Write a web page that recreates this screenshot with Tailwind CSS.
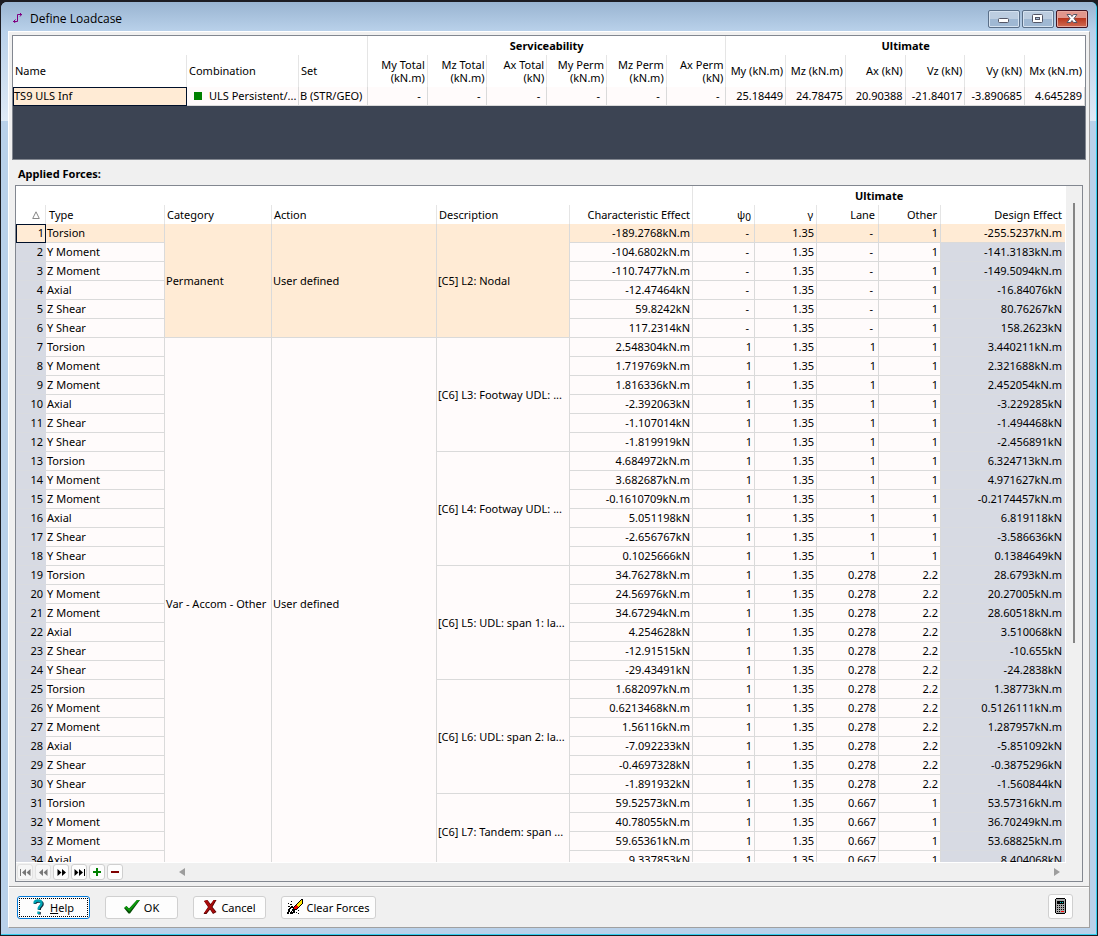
<!DOCTYPE html>
<html lang="en">
<head>
  <meta charset="UTF-8">
  <meta name="viewport" content="width=device-width, initial-scale=1.0">
  <title>Define Loadcase</title>
  <script src="https://cdn.jsdelivr.net/npm/@tailwindcss/browser@4"></script>
</head>
<body class="h-screen overflow-hidden bg-[#1c1c22] font-['Tahoma','Noto_Sans',sans-serif] text-[11px] leading-[13px] text-black">
  <div class="h-full p-px pt-[2px]">
    <div class="flex h-full flex-col rounded-t-md border-r border-b border-[#35cdee] bg-[#b9d1ea]">

      <!-- Title bar -->
      <header class="flex h-[29px] shrink-0 items-center rounded-t-md bg-linear-to-b from-[#99b4d1] to-[#b9d1ea] pt-[5px] pr-[8px] pl-[12px]">
        <svg class="mr-[7px] mb-[2px] size-[10px]" viewBox="0 0 10 10" fill="none" stroke="#800080">
          <path d="M0 8.500H4.500V1.500H9M2.500 6.500L.5 8.500L2.500 10M7 0L8.500 1.500L7 3.500"/>
        </svg>
        <h1 class="font-['Segoe_UI','Open_Sans',sans-serif] text-[12px] leading-4">Define Loadcase</h1>
        <div class="ml-auto flex gap-[2px]">
          <button type="button" aria-label="Minimize" class="flex h-[18px] w-8 items-center justify-center rounded-[2px] border border-[#5a6f88] bg-linear-to-b from-[#bccde0] from-50% to-[#9fb8d3] to-50% shadow-[inset_0_0_0_1px_#d5e2f0]">
            <svg class="size-3" viewBox="0 0 12 12"><rect x=".5" y="5.500" width="10" height="4" rx="1" fill="#fff" stroke="#535666"/></svg>
          </button>
          <button type="button" aria-label="Maximize" class="flex h-[18px] w-8 items-center justify-center rounded-[2px] border border-[#5a6f88] bg-linear-to-b from-[#bccde0] from-50% to-[#9fb8d3] to-50% shadow-[inset_0_0_0_1px_#d5e2f0]">
            <svg class="size-3" viewBox="0 0 12 12"><rect x=".5" y="1.500" width="10" height="8" rx="1" fill="#fff" stroke="#535666"/><rect x="3.500" y="4.500" width="4" height="2" fill="#a9bfd8" stroke="#535666"/></svg>
          </button>
          <button type="button" aria-label="Close" class="flex h-[18px] w-8 items-center justify-center rounded-[2px] border border-[#431422] bg-linear-to-b from-[#e0968c] from-45% via-[#b8341b] via-45% to-[#d06a52] shadow-[inset_0_0_0_1px_#e8aaa0]">
            <svg class="size-3" viewBox="0 0 12 12"><path d="M1 1.500H4.500L6 3.500L7.500 1.500H11L8 5.500L11 9.500H7.500L6 7.500L4.500 9.500H1L4 5.500Z" fill="#fff" stroke="#535666"/></svg>
          </button>
        </div>
      </header>

      <div class="min-h-0 flex-1 bg-linear-to-b from-[#b9d1ea] to-[#dfeaf6] bg-[length:100%_90px] bg-no-repeat pr-[6px] pb-[6px] pl-[7px]">
        <main class="flex h-full flex-col border border-t-white border-r-[#a0a0a0] border-b-[#a0a0a0] border-l-white bg-[#f0f0f0]">

          <!-- Loadcase summary -->
          <section class="mx-[3px] mt-[3px] h-[125px] shrink-0 border border-[#828790] bg-[#3c4453]">
            <table class="w-full table-fixed border-separate border-spacing-0 bg-white">
              <colgroup>
                <col class="w-[174px]"><col class="w-[112px]"><col class="w-[69px]">
                <col span="12">
              </colgroup>
              <thead>
                <tr class="h-[19px]">
                  <th colspan="3" class="border-r border-[#e5e5e5] p-0"></th>
                  <th colspan="6" scope="colgroup" class="border-r border-[#e5e5e5] p-0 font-bold">Serviceability</th>
                  <th colspan="6" scope="colgroup" class="p-0 font-bold">Ultimate</th>
                </tr>
                <tr id="case-head" class="h-[32px]"></tr>
              </thead>
              <tbody>
                <tr id="case-row" class="h-[19px] bg-[#fffbfb]"></tr>
              </tbody>
            </table>
          </section>

          <h2 class="shrink-0 px-[9px] pt-[7px] pb-[5px] font-bold">Applied Forces:</h2>

          <!-- Applied forces -->
          <section class="mx-[6px] flex min-h-0 flex-1 flex-col border border-[#828790]">
            <div class="flex min-h-0 flex-1">
              <div class="min-w-0 flex-1 overflow-hidden border-r border-b border-white bg-[#fffbfb]">
                <table class="w-full table-fixed border-separate border-spacing-0">
                  <colgroup>
                    <col class="w-[30px]"><col class="w-[119px]"><col class="w-[107px]"><col class="w-[165px]"><col class="w-[133px]"><col class="w-[123px]">
                    <col class="w-[62px]"><col class="w-[62px]"><col class="w-[62px]"><col class="w-[62px]"><col class="w-[124px]">
                  </colgroup>
                  <thead class="bg-white">
                    <tr class="h-[19px]">
                      <th colspan="6" class="border-r border-[#e5e5e5] p-0"></th>
                      <th colspan="5" scope="colgroup" class="p-0 font-bold">Ultimate</th>
                    </tr>
                    <tr class="h-[19px]">
                      <th scope="col" aria-label="Number" class="border-r border-[#e5e5e5] p-0 pr-[5px]">
                        <svg class="ml-auto size-2" viewBox="0 0 8 8" fill="none" stroke="#888"><path d="M.7 7.500L4 .8L7.300 7.500Z"/></svg>
                      </th>
                      <th scope="col" class="border-r border-[#e5e5e5] p-0 pl-[3px] text-left font-normal">Type</th>
                      <th scope="col" class="border-r border-[#e5e5e5] p-0 pl-[2px] text-left font-normal">Category</th>
                      <th scope="col" class="border-r border-[#e5e5e5] p-0 pl-[2px] text-left font-normal">Action</th>
                      <th scope="col" class="border-r border-[#e5e5e5] p-0 pl-[2px] text-left font-normal">Description</th>
                      <th scope="col" class="border-r border-[#e5e5e5] p-0 pr-[2px] text-right font-normal">Characteristic Effect</th>
                      <th scope="col" class="border-r border-[#e5e5e5] p-0 pr-[3px] text-right font-normal">ψ<sub class="bottom-[-2px] text-[10px]">0</sub></th>
                      <th scope="col" class="border-r border-[#e5e5e5] p-0 pr-[3px] text-right font-normal">γ</th>
                      <th scope="col" class="border-r border-[#e5e5e5] p-0 pr-[3px] text-right font-normal">Lane</th>
                      <th scope="col" class="border-r border-[#e5e5e5] p-0 pr-[3px] text-right font-normal">Other</th>
                      <th scope="col" class="p-0 pr-[3px] text-right font-normal">Design Effect</th>
                    </tr>
                  </thead>
                  <tbody id="forces"></tbody>
                </table>
              </div>
              <div class="w-4 shrink-0 pt-[17px] pl-[7px]">
                <div class="h-[440px] w-[2px] bg-[#858585]"></div>
              </div>
            </div>

            <div class="flex h-[18px] shrink-0 items-center gap-[2px] pr-[22px] pl-px">
              <button type="button" disabled aria-label="First" class="flex size-4 items-center justify-center rounded-[3px] border border-[#e2e2e2] bg-[#f6f6f6]">
                <svg class="h-[7px] w-[11px]" viewBox="0 0 11 7" fill="#777"><path d="M0 0H1V7H0ZM6 0V7L2 3.500ZM10.500 0V7L6.500 3.500Z"/></svg>
              </button>
              <button type="button" disabled aria-label="Previous" class="flex size-4 items-center justify-center rounded-[3px] border border-[#e2e2e2] bg-[#f6f6f6]">
                <svg class="h-[7px] w-[9px]" viewBox="0 0 9 7" fill="#777"><path d="M4 0V7L0 3.500ZM8.500 0V7L4.500 3.500Z"/></svg>
              </button>
              <button type="button" aria-label="Next" class="flex size-4 items-center justify-center rounded-[3px] border border-[#cfcfcf] bg-[#fdfdfd]">
                <svg class="h-[7px] w-[9px]" viewBox="0 0 9 7"><path d="M.5 0V7L4.500 3.500ZM5 0V7L9 3.500Z"/></svg>
              </button>
              <button type="button" aria-label="Last" class="flex size-4 items-center justify-center rounded-[3px] border border-[#cfcfcf] bg-[#fdfdfd]">
                <svg class="h-[7px] w-[11px]" viewBox="0 0 11 7"><path d="M.5 0V7L4.500 3.500ZM5 0V7L9 3.500ZM10 0H11V7H10Z"/></svg>
              </button>
              <button type="button" aria-label="Add" class="flex size-4 items-center justify-center rounded-[3px] border border-[#cfcfcf] bg-[#fdfdfd]">
                <svg class="size-2" viewBox="0 0 8 8" fill="#008000"><path d="M3 0H5V3H8V5H5V8H3V5H0V3H3Z"/></svg>
              </button>
              <button type="button" aria-label="Remove" class="flex size-4 items-center justify-center rounded-[3px] border border-[#cfcfcf] bg-[#fdfdfd]">
                <svg class="size-2" viewBox="0 0 8 8" fill="#800000"><path d="M0 3H8V5H0Z"/></svg>
              </button>
              <svg class="ml-[54px] h-2 w-[6px]" viewBox="0 0 6 8" fill="#9d9d9d"><path d="M6 0V8L0 4Z"/></svg>
              <svg class="ml-auto h-2 w-[6px]" viewBox="0 0 6 8" fill="#9d9d9d"><path d="M0 0V8L6 4Z"/></svg>
            </div>
          </section>

          <!-- Buttons -->
          <footer class="mt-[4px] flex h-[41px] shrink-0 items-center gap-[15px] border-t border-[#a0a0a0] pr-[16px] pl-[8px] shadow-[inset_0_1px_0_#fff]">
            <button type="button" class="h-[23px] w-[73px] rounded-[3px] border border-[#0078d7] bg-[#fdfdfd] p-px">
              <span class="flex h-full items-center justify-center gap-[6px] border border-dotted border-black">
                <svg class="h-4 w-[11px]" viewBox="0 0 11 16" fill="none">
                  <path d="M2 5C2 1.500 9.500 1.500 9.500 5C9.500 7.500 6.500 7.500 6.500 11M6.500 13V15.500" stroke="#123" stroke-width="2.600"/>
                  <path d="M1.500 4.500C1.500 .5 8.500 .5 8.500 4.500C8.500 7 5.500 7 5.500 10.500M5.500 12.500V15" stroke="#00a5b5" stroke-width="2.400"/>
                </svg>
                <span><u>H</u>elp</span>
              </span>
            </button>
            <button type="button" class="flex h-[23px] w-[73px] items-center justify-center gap-1 rounded-[3px] border border-[#d0d0d0] bg-[#fdfdfd]">
              <svg class="size-4" viewBox="0 0 16 16">
                <path d="M0 9L2.500 7L5 9.500L13 1H16L6 14.500H4.500Z" fill="#064d06"/>
                <path d="M.5 8.500L2.500 7L5 10L13 1H15.500L5.500 12.500Z" fill="#0c9c0c"/>
              </svg>
              OK
            </button>
            <button type="button" class="flex h-[23px] w-[73px] items-center justify-center gap-1 rounded-[3px] border border-[#d0d0d0] bg-[#fdfdfd]">
              <svg class="h-4 w-[14px]" viewBox="0 0 14 16">
                <path d="M1 2L4.500 1L7.500 5L11 1H13.500L9.500 8L13.500 13L10 15L7 10.500L3.500 15H.5L5 8Z" fill="#500"/>
                <path d="M1 2L4 1L7.500 6L10.500 1H12.500L8.500 8L12.500 13L10 14L7 9.500L3 14H1L5.500 8Z" fill="#a80c0c"/>
              </svg>
              Cancel
            </button>
            <button type="button" class="flex h-[23px] w-[95px] items-center justify-center gap-[3px] rounded-[3px] border border-[#d0d0d0] bg-[#fdfdfd]">
              <svg class="size-4" viewBox="0 0 16 16" shape-rendering="crispEdges">
                <path d="M6 9L14 0H16V4L9 11H6Z" fill="#000"/>
                <path d="M9 6L14 1H15V4L11 8Z" fill="#ffe600"/>
                <path d="M7 9L9 6L11 8L9 10H7Z" fill="#e00"/>
                <path d="M4 2H5V3H4ZM1 4H2V5H1ZM3 5H5V6H3ZM1 7H3V8H1ZM4 7H6V8H4ZM3 8H6V9H3ZM2 9H4V10H2ZM1 10H3V13H1ZM5 10H7V12H5ZM6 11H8V14H6ZM4 12H5V13H4ZM0 13H2V15H0ZM3 13H6V15H3ZM9 13H10V14H9ZM11 11H12V12H11ZM11 14H12V15H11Z" fill="#000"/>
              </svg>
              Clear Forces
            </button>
            <button type="button" aria-label="Calculator" class="-mt-[2px] ml-auto flex size-[25px] items-center justify-center rounded-[3px] border border-[#d0d0d0] bg-[#fdfdfd]">
              <svg class="h-4 w-[11px]" viewBox="0 0 11 16" shape-rendering="crispEdges">
                <path d="M1 0H10V1H11V15H10V16H1V15H0V1H1Z"/>
                <path d="M1 1H10V15H1Z" fill="#a8a8a8"/>
                <path d="M2 3H9V6H2Z"/>
                <path d="M5 4H6V5H5ZM7 4H8V5H7Z" fill="#0cc"/>
                <path d="M2 7H3V8H2ZM4 7H5V8H4ZM6 7H7V8H6ZM8 7H9V8H8ZM2 9H3V10H2ZM4 9H5V10H4ZM6 9H7V10H6ZM8 9H9V10H8ZM2 11H3V12H2ZM4 11H5V12H4ZM6 11H7V12H6ZM8 11H9V12H8ZM2 13H3V14H2ZM4 13H5V14H4Z"/>
                <path d="M6 13H9V14H6Z" fill="#f00"/>
              </svg>
            </button>
          </footer>
        </main>
      </div>
    </div>
  </div>

  <script>
    const caseHeads = ['Name', 'Combination', 'Set', 'My Total<br>(kN.m)', 'Mz Total<br>(kN.m)', 'Ax Total<br>(kN)',
      'My Perm<br>(kN.m)', 'Mz Perm<br>(kN.m)', 'Ax Perm<br>(kN)', 'My (kN.m)', 'Mz (kN.m)', 'Ax (kN)', 'Vz (kN)', 'Vy (kN)', 'Mx (kN.m)'];
    const caseValues = ['-', '-', '-', '-', '-', '-', '25.18449', '24.78475', '20.90388', '-21.84017', '-3.890685', '4.645289'];

    document.getElementById('case-head').innerHTML = caseHeads.map((h, i) => i < 3
      ? `<th scope="col" class="border-r border-[#e5e5e5] p-0 pb-px pl-[2px] text-left font-normal">${h}</th>`
      : `<th scope="col" class="border-r border-[#e5e5e5] p-0 pr-[2px] pb-px text-right font-normal whitespace-nowrap last:border-r-0 last:pr-[3px]">${h}</th>`).join('');

    document.getElementById('case-row').innerHTML = `
      <td class="border-r border-b border-[#dadada] bg-[#ffebd5] p-0 pb-px pl-px outline-1 -outline-offset-1 outline-[#00102a]">TS9 ULS Inf</td>
      <td class="border-r border-b border-[#dadada] p-0 pb-px pl-[7px] whitespace-nowrap"><span class="mr-[7px] inline-block size-2 bg-[#008000]"></span>ULS Persistent/...</td>
      <td class="border-r border-b border-[#dadada] p-0 pb-px pl-px whitespace-nowrap">B (STR/GEO)</td>` +
      caseValues.map(v => v === '-'
        ? '<td class="border-r border-b border-[#dadada] p-0 pr-[6px] pb-px text-right">-</td>'
        : `<td class="border-r border-b border-[#dadada] p-0 pr-[2px] pb-px text-right">${v}</td>`).join('');

    const types = ['Torsion', 'Y Moment', 'Z Moment', 'Axial', 'Z Shear', 'Y Shear'];

    // each group: description, psi0, lane, other, [characteristic, design] pairs
    const groups = [
      ['[C5] L2: Nodal', '-', '-', '1', [['-189.2768', '-255.5237'], ['-104.6802', '-141.3183'], ['-110.7477', '-149.5094'], ['-12.47464', '-16.84076'], ['59.8242', '80.76267'], ['117.2314', '158.2623']]],
      ['[C6] L3: Footway UDL: ...', '1', '1', '1', [['2.548304', '3.440211'], ['1.719769', '2.321688'], ['1.816336', '2.452054'], ['-2.392063', '-3.229285'], ['-1.107014', '-1.494468'], ['-1.819919', '-2.456891']]],
      ['[C6] L4: Footway UDL: ...', '1', '1', '1', [['4.684972', '6.324713'], ['3.682687', '4.971627'], ['-0.1610709', '-0.2174457'], ['5.051198', '6.819118'], ['-2.656767', '-3.586636'], ['0.1025666', '0.1384649']]],
      ['[C6] L5: UDL: span 1: la...', '1', '0.278', '2.2', [['34.76278', '28.6793'], ['24.56976', '20.27005'], ['34.67294', '28.60518'], ['4.254628', '3.510068'], ['-12.91515', '-10.655'], ['-29.43491', '-24.2838']]],
      ['[C6] L6: UDL: span 2: la...', '1', '0.278', '2.2', [['1.682097', '1.38773'], ['0.6213468', '0.5126111'], ['1.56116', '1.287957'], ['-7.092233', '-5.851092'], ['-0.4697328', '-0.3875296'], ['-1.891932', '-1.560844']]],
      ['[C6] L7: Tandem: span ...', '1', '0.667', '1', [['59.52573', '53.57316'], ['40.78055', '36.70249'], ['59.65361', '53.68825'], ['9.337853', '8.404068']]]
    ];

    function mergedCell(text, rows, selected) {
      return selected
        ? `<td rowspan="${rows}" class="border-r border-b border-[#dadada] bg-[#ffebd5] p-0 pl-px whitespace-nowrap">${text}</td>`
        : `<td rowspan="${rows}" class="border-r border-b border-[#dadada] p-0 pl-px whitespace-nowrap">${text}</td>`;
    }

    function valueCell(text) {
      return text === '-'
        ? '<td class="border-r border-b border-[#dadada] p-0 pr-[5px] pb-px text-right">-</td>'
        : `<td class="border-r border-b border-[#dadada] p-0 pr-[2px] pb-px text-right">${text}</td>`;
    }

    let number = 0;
    let html = '';
    groups.forEach(([description, psi, lane, other, effects], g) => {
      effects.forEach(([characteristic, design], i) => {
        const unit = i < 3 ? 'kN.m' : 'kN';
        number++;
        html += number === 1 ? '<tr class="h-[19px] bg-[#ffebd5]">' : '<tr class="h-[19px]">';
        html += number === 1
          ? '<td class="border-b border-[#dadada] p-0 pr-[2px] pb-px text-right outline-1 -outline-offset-1 outline-[#00102a]">1</td>'
          : `<td class="border-b border-[#d9dbe0] bg-[#d7dae3] p-0 pr-[3px] pb-px text-right">${number}</td>`;
        html += `<td class="border-r border-b border-[#dadada] p-0 pb-px pl-px">${types[i]}</td>`;
        if (i === 0 && g < 2) {
          html += mergedCell(g === 0 ? 'Permanent' : 'Var - Accom - Other', g === 0 ? 6 : 28, g === 0);
          html += mergedCell('User defined', g === 0 ? 6 : 28, g === 0);
        }
        if (i === 0) html += mergedCell(description, effects.length, g === 0);
        html += valueCell(characteristic + unit) + valueCell(psi) + valueCell('1.35') + valueCell(lane) + valueCell(other);
        html += number === 1
          ? `<td class="border-b border-[#dadada] p-0 pr-[3px] pb-px text-right">${design}${unit}</td>`
          : `<td class="border-b border-[#d9dbe0] bg-[#d7dae3] p-0 pr-[3px] pb-px text-right">${design}${unit}</td>`;
        html += '</tr>';
      });
    });
    document.getElementById('forces').innerHTML = html;
  </script>
</body>
</html>
